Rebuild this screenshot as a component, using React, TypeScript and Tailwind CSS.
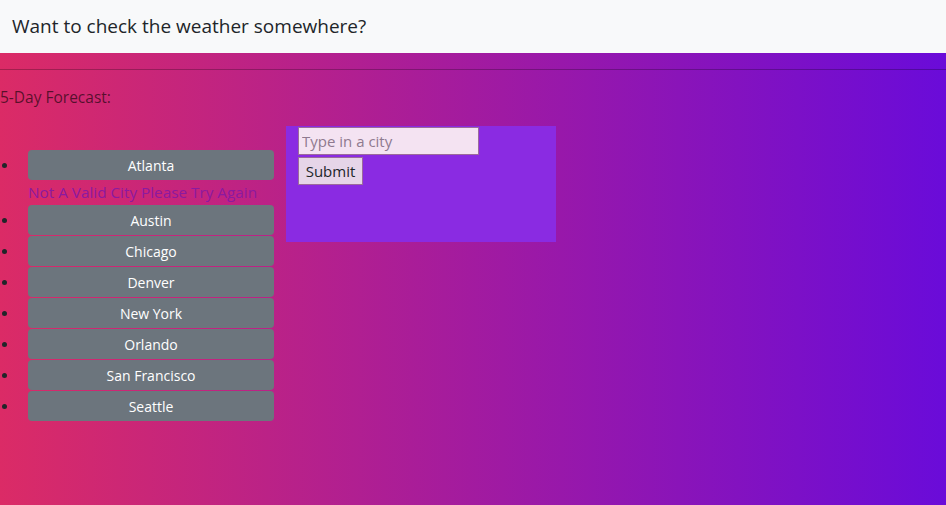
const cities = ["Austin", "Chicago", "Denver", "New York", "Orlando", "San Francisco", "Seattle"];

function Dot() {
  return <span className="mr-[21px] ml-[2px] h-[5px] w-[5px] shrink-0 rounded-full bg-[#212529]" />;
}

function CityButton({ name }: { name: string }) {
  return (
    <button className="h-[30px] w-[246px] rounded-[4px] bg-[#6c757d] text-[14px] text-white">
      {name}
    </button>
  );
}

export default function App() {
  return (
    <div className="min-h-[505px] bg-[linear-gradient(to_right,#db2b66,#6a0bd9)] font-['Open_Sans',sans-serif] text-[#212529]">
      <nav className="flex h-[53px] items-center bg-[#f8f9fa] px-[12px]">
        <span className="text-[19px]">Want to check the weather somewhere?</span>
      </nav>
      <hr className="mt-[16px] border-t border-black/25" />
      <p className="mt-[15px] text-[15.5px] leading-[24px] text-black/60">5-Day Forecast:</p>

      <div className="mt-[17px] flex items-start">
        <ul className="mt-[24px] flex w-[286px] flex-col gap-[1px]">
          <li>
            <div className="flex items-center">
              <Dot />
              <CityButton name="Atlanta" />
            </div>
            <div className="ml-[28px] py-[2px] text-[15.3px] leading-[20px] text-[#8b1aa0]">
              Not A Valid City Please Try Again
            </div>
          </li>
          {cities.map((c) => (
            <li key={c} className="flex items-center">
              <Dot />
              <CityButton name={c} />
            </li>
          ))}
        </ul>

        <div className="flex h-[116px] w-[270px] flex-col items-start gap-[2px] bg-[#8a2be2] px-[12px] pt-[1px]">
          <input
            placeholder="Type in a city"
            className="h-[28px] w-[181px] border border-[#9c6a9c] bg-[#f4e3f2] px-[3px] text-[15px] text-[#212529] placeholder:text-[#8f7a8f]"
          />
          <button className="h-[28px] w-[65px] border border-[#9c6a9c] bg-[#e6d5e8] text-[15px] text-[#212529]">
            Submit
          </button>
        </div>
      </div>
    </div>
  );
}
